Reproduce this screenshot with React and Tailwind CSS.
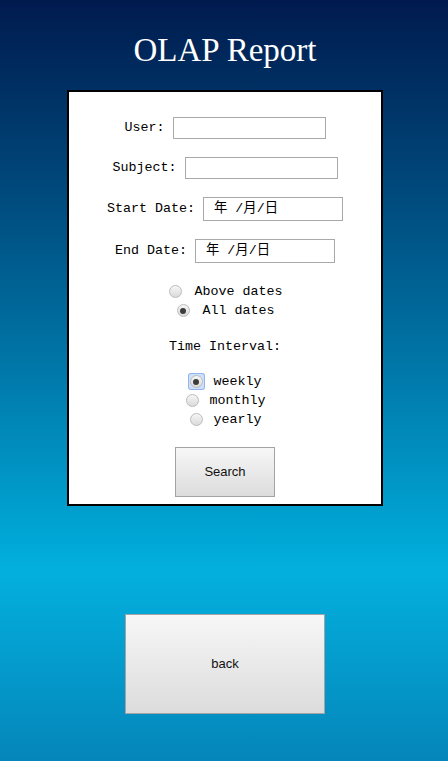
import React from 'react';

function Radio({ checked, focused }) {
  return (
    <span
      className={`flex items-center justify-center w-[15px] h-[15px] ${
        focused ? 'rounded-[2px] bg-[#cfe0fb] ring-1 ring-[#8fb4ee]' : ''
      }`}
    >
      <span className="flex items-center justify-center w-[13px] h-[13px] rounded-full border border-[#bcbcbc] bg-gradient-to-b from-[#f6f6f6] to-[#dadada]">
        {checked && <span className="w-[6px] h-[6px] rounded-full bg-[#3c3c3c]" />}
      </span>
    </span>
  );
}

function FieldRow({ label, width, height, date }) {
  return (
    <div className="flex items-center justify-center gap-2">
      <span>{label}</span>
      <div
        className={`flex items-center border border-[#a9a9a9] bg-white pl-[10px] ${width} ${height}`}
      >
        {date && (
          <span className="font-['Liberation_Mono','Noto_Sans_CJK_SC',monospace] text-[13.333px] leading-none whitespace-pre">
            年 /月/日
          </span>
        )}
      </div>
    </div>
  );
}

export default function App() {
  return (
    <div className="min-h-[761px] w-full pl-[2px] bg-gradient-to-b from-[#011a4e] via-[#03b0de] via-75% to-[#0586ba] font-['Liberation_Mono',monospace] text-black">
      {/* Title */}
      <h1 className="pt-[30px] text-center font-['Liberation_Serif',serif] text-[33px] leading-[40px] font-normal text-white">
        OLAP Report
      </h1>

      {/* Form card */}
      <div className="mx-auto mt-[20px] w-[316px] border-2 border-black bg-white pt-[25px] pb-[7px] text-[13.333px]">
        <div className="flex flex-col gap-[18px]">
          <FieldRow label="User:" width="w-[153px]" height="h-[22px]" />
          <FieldRow label="Subject:" width="w-[153px]" height="h-[22px]" />
          <FieldRow label="Start Date:" width="w-[140px]" height="h-[24px]" date />
          <FieldRow label="End Date:" width="w-[140px]" height="h-[24px]" date />
        </div>

        {/* Date range */}
        <div className="mt-[19px] flex flex-col items-center leading-[19px]">
          <label className="flex items-center gap-3">
            <Radio />
            <span>Above dates</span>
          </label>
          <label className="flex items-center gap-3">
            <Radio checked />
            <span>All dates</span>
          </label>
        </div>

        <p className="mt-[17px] text-center leading-[19px]">Time Interval:</p>

        {/* Interval */}
        <div className="mt-[16px] flex flex-col items-center leading-[19px]">
          <label className="flex items-center gap-[10px]">
            <Radio checked focused />
            <span>weekly</span>
          </label>
          <label className="flex items-center gap-[10px]">
            <Radio />
            <span>monthly</span>
          </label>
          <label className="flex items-center gap-[10px]">
            <Radio />
            <span>yearly</span>
          </label>
        </div>

        <div className="mt-[18px] flex justify-center">
          <button className="h-[50px] w-[100px] border border-[#a3a3a3] bg-gradient-to-b from-[#f7f7f7] to-[#dcdcdc] font-['Liberation_Sans',sans-serif] text-[13px] text-[#111]">
            Search
          </button>
        </div>
      </div>

      {/* Back */}
      <div className="mt-[108px] flex justify-center pb-[47px]">
        <button className="h-[100px] w-[200px] border border-[#a3a3a3] bg-gradient-to-b from-[#f7f7f7] to-[#dcdcdc] font-['Liberation_Sans',sans-serif] text-[13px] text-[#111]">
          back
        </button>
      </div>
    </div>
  );
}
